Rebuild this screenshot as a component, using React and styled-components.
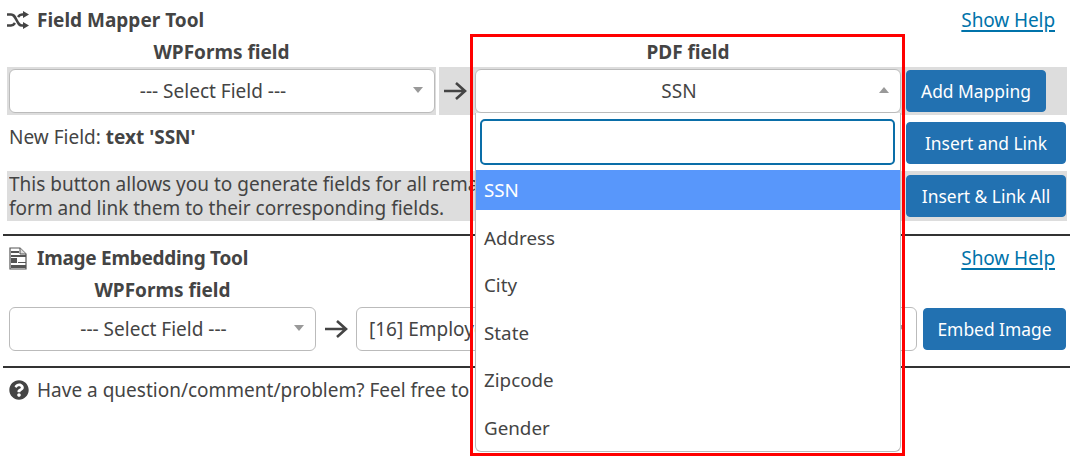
import React from "react";
import styled, { createGlobalStyle } from "styled-components";
import { FaQuestionCircle } from "react-icons/fa";

const Global = createGlobalStyle`
  html, body { margin: 0; padding: 0; background: #fff; }
  body { font-family: "Noto Sans", "Open Sans", sans-serif; color: #444; font-size: 19px; }
`;

const Page = styled.div`
  position: relative;
  width: 1073px;
  height: 457px;
  overflow: hidden;
  padding: 0 3px;
  box-sizing: border-box;
`;

const Section = styled.section`
  height: ${(p) => p.$h}px;
  border-bottom: 2px solid #333;
  box-sizing: border-box;
`;

const TitleBar = styled.div`
  display: flex;
  align-items: center;
  justify-content: space-between;
  height: ${(p) => p.$h}px;
  padding: 0 15px 0 4px;
`;

const Title = styled.h3`
  display: flex;
  align-items: center;
  gap: ${(p) => p.$gap}px;
  margin: 0;
  padding-left: ${(p) => p.$pad || 0}px;
  font-size: 19px;
  font-weight: 700;
  letter-spacing: ${(p) => p.$ls || 0}px;
  color: #444;
`;

const HelpLink = styled.a`
  color: #0073aa;
  font-size: 19px;
  text-decoration: underline;
  text-decoration-thickness: 1.5px;
  text-underline-offset: 3px;
  letter-spacing: -0.1px;
`;

const ColumnLabels = styled.div`
  display: flex;
  height: ${(p) => p.$h}px;
  align-items: flex-start;
  line-height: 24px;
  padding-left: ${(p) => p.$pad}px;
`;

const ColumnLabel = styled.div`
  width: ${(p) => p.$w}px;
  text-align: center;
  font-weight: 700;
  font-size: 19px;
`;

const GrayRow = styled.div`
  display: flex;
  gap: 3px;
  height: 48px;
  margin-left: 4px;
  width: 1060px;
`;

const GrayCell = styled.div`
  display: flex;
  align-items: center;
  height: 100%;
  background: #ddd;
  width: ${(p) => (p.$w ? `${p.$w}px` : "auto")};
  flex: ${(p) => (p.$w ? "none" : "1")};
  padding: 0 2px;
  box-sizing: border-box;
`;

const SelectBox = styled.div`
  position: relative;
  display: flex;
  align-items: center;
  justify-content: ${(p) => (p.$left ? "flex-start" : "center")};
  width: ${(p) => p.$w}px;
  height: 44px;
  flex: none;
  background: #fff;
  border: 1px solid #bbb;
  border-radius: 6px;
  box-sizing: border-box;
  padding: ${(p) => (p.$left ? "0 0 1px 12px" : "0 18px 1px 0")};
  font-size: 19px;
  white-space: nowrap;
  overflow: hidden;
  &::after {
    content: "";
    position: absolute;
    right: 11px;
    top: 17px;
    border-left: 5px solid transparent;
    border-right: 5px solid transparent;
    ${(p) => (p.$open ? "border-bottom: 6px solid #999;" : "border-top: 6px solid #999;")}
  }
`;

const ArrowMark = styled.svg`
  flex: none;
  width: 24px;
  height: 20px;
  margin: ${(p) => p.$m};
`;

const ActionButton = styled.button`
  flex: none;
  width: ${(p) => p.$w}px;
  height: 42px;
  margin-left: ${(p) => p.$ml || 0}px;
  background: #2271b1;
  color: #fff;
  border: 1px solid #2271b1;
  border-radius: 4px;
  padding: 0;
  font-family: inherit;
  font-size: 17.4px;
  white-space: nowrap;
`;

const NoteRow = styled.div`
  display: flex;
  align-items: center;
  justify-content: space-between;
  height: ${(p) => p.$h}px;
  margin-left: 4px;
  width: 1059px;
  box-sizing: border-box;
  padding-left: 2px;
`;

const GrayNoteRow = styled(NoteRow)`
  background: #ddd;
  width: 1060px;
  padding-right: 1px;
`;

const NoteText = styled.div`
  font-size: 19px;
  line-height: 24px;
  white-space: nowrap;
  overflow: hidden;
  width: 880px;
  padding-bottom: ${(p) => p.$pb || 0}px;
`;

const EmbedRow = styled.div`
  display: flex;
  align-items: center;
  height: 44px;
  margin-left: 6px;
`;

const Footer = styled.div`
  display: flex;
  align-items: center;
  gap: 8px;
  padding: 9px 0 0 6px;
  font-size: 19px;
  white-space: nowrap;
  svg { flex: none; }
`;

const RedFrame = styled.div`
  position: absolute;
  left: 470px;
  top: 34px;
  width: 435px;
  height: 422px;
  box-sizing: border-box;
  border: 3px solid #f00;
  pointer-events: none;
  z-index: 3;
`;

const Dropdown = styled.div`
  position: absolute;
  left: 475px;
  top: 113px;
  width: 426px;
  height: 339px;
  box-sizing: border-box;
  background: #fff;
  border: 1px solid #bbb;
  border-top: none;
  border-radius: 0 0 6px 6px;
  z-index: 2;
  padding-top: 6px;
`;

const SearchBox = styled.input`
  display: block;
  width: 415px;
  height: 46px;
  margin: 0 0 5px 4px;
  box-sizing: border-box;
  border: 2px solid #0a6ea8;
  border-radius: 5px;
  background: #fff;
  outline: none;
`;

const OptionList = styled.ul`
  list-style: none;
  margin: 0;
  padding: 0;
  display: flex;
  flex-direction: column;
  gap: 7.6px;
`;

const Option = styled.li`
  height: 40px;
  display: flex;
  align-items: center;
  padding-left: 8px;
  box-sizing: border-box;
  font-size: 18.8px;
  color: ${(p) => (p.$active ? "#fff" : "#444")};
  background: ${(p) => (p.$active ? "#5897fb" : "transparent")};
`;

const Arrow = ({ m }) => (
  <ArrowMark $m={m} viewBox="0 0 24 20" fill="none" stroke="#444" strokeWidth="2.6">
    <path d="M1 10h21M13 2l9 8-9 8" />
  </ArrowMark>
);

const ShuffleIcon = () => (
  <svg width="22" height="18" viewBox="0 0 22 18" fill="none" stroke="#444" strokeWidth="2.6">
    <path d="M0 3.5h4c2.5 0 3.5 1.5 5.5 5.5s3 5.500 5.500 5.500h2" />
    <path d="M0 14.500h4c2 0 3-1 4-2.500M11 6c1-1.500 2-2.500 4-2.500h2" />
    <path d="M16 0l6 3.500-6 3.500zM16 11l6 3.500-6 3.500z" fill="#444" stroke="none" />
  </svg>
);

const DocIcon = () => (
  <svg width="18" height="23" viewBox="0 0 18 23" style={{ marginRight: 1 }}>
    <path d="M1 1h10l6 6v15H1z" fill="#fff" stroke="#555" strokeWidth="1.2" />
    <path d="M11 1v6h6" fill="#ddd" stroke="#555" strokeWidth="1" />
    <path d="M2 4h8v2H2zM2 8h15v2H2zM2 11h6v5H2zM9 15h8v1H9zM2 18h15v3H2z" fill="#555" />
  </svg>
);

export default function App() {
  return (
    <Page>
      <Global />
      <Section $h={236}>
        <TitleBar $h={40}>
          <Title $gap={8}><ShuffleIcon />Field Mapper Tool</Title>
          <HelpLink href="#">Show Help</HelpLink>
        </TitleBar>
        <ColumnLabels $h={27} $pad={4}>
          <ColumnLabel $w={429}>WPForms field</ColumnLabel>
          <ColumnLabel $w={38} />
          <ColumnLabel $w={428}>PDF field</ColumnLabel>
        </ColumnLabels>
        <GrayRow>
          <GrayCell $w={429}>
            <SelectBox $w={426}>--- Select Field ---</SelectBox>
          </GrayCell>
          <GrayCell>
            <Arrow m="0 8px 0 2px" />
            <SelectBox $w={426} $open>SSN</SelectBox>
            <ActionButton $w={140} $ml={5}>Add Mapping</ActionButton>
          </GrayCell>
        </GrayRow>
        <NoteRow $h={56}>
          <NoteText $pb={12}>New Field: <b>text 'SSN'</b></NoteText>
          <ActionButton $w={160}>Insert and Link</ActionButton>
        </NoteRow>
        <GrayNoteRow $h={50}>
          <NoteText $pb={1}>
            This button allows you to generate fields for all remaining PDF fields in the<br />
            form and link them to their corresponding fields.
          </NoteText>
          <ActionButton $w={160}>Insert &amp; Link All</ActionButton>
        </GrayNoteRow>
      </Section>
      <Section $h={132}>
        <TitleBar $h={44}>
          <Title $gap={9} $pad={2} $ls={-0.25}><DocIcon />Image Embedding Tool</Title>
          <HelpLink href="#">Show Help</HelpLink>
        </TitleBar>
        <ColumnLabels $h={27} $pad={6}>
          <ColumnLabel $w={307} style={{ marginTop: -2 }}>WPForms field</ColumnLabel>
        </ColumnLabels>
        <EmbedRow>
          <SelectBox $w={307}>--- Select Field ---</SelectBox>
          <Arrow m="0 8px 0 8px" />
          <SelectBox $w={561} $left>[16] Employee Photo</SelectBox>
          <ActionButton $w={143} $ml={6}>Embed Image</ActionButton>
        </EmbedRow>
      </Section>
      <Footer>
        <FaQuestionCircle size={20} color="#444" />
        Have a question/comment/problem? Feel free to use the help forum.
      </Footer>
      <Dropdown>
        <SearchBox />
        <OptionList>
          <Option $active>SSN</Option>
          <Option>Address</Option>
          <Option>City</Option>
          <Option>State</Option>
          <Option>Zipcode</Option>
          <Option>Gender</Option>
        </OptionList>
      </Dropdown>
      <RedFrame />
    </Page>
  );
}
